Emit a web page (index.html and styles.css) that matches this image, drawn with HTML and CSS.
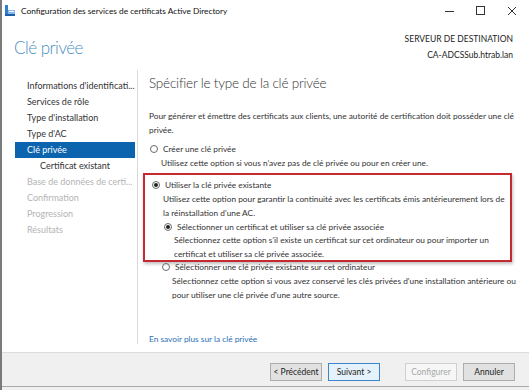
FILE: index.html
```html
<!DOCTYPE html>
<html lang="fr">
<head>
<meta charset="utf-8">
<title>Configuration des services de certificats Active Directory</title>
<link rel="stylesheet" href="styles.css">
</head>
<body>
<div class="window">
  <div class="titlebar">
    <svg class="appicon" width="10" height="11" viewBox="0 0 10 11">
      <rect x="0" y="0" width="3" height="9" fill="#2f7fd0"/>
      <rect x="3" y="5" width="7" height="4" fill="#8ab8e6"/>
      <rect x="0" y="9" width="10" height="2" fill="#1b5fa8"/>
      <rect x="4" y="6" width="5" height="1" fill="#ffffff"/>
    </svg>
    <span class="title">Configuration des services de certificats Active Directory</span>
    <div class="controls">
      <svg class="ctl" width="30" height="22" viewBox="0 0 30 22"><line x1="10" y1="11.5" x2="19" y2="11.5" stroke="#333" stroke-width="1"/></svg>
      <svg class="ctl" width="30" height="22" viewBox="0 0 30 22"><rect x="10.5" y="6.5" width="8" height="8" fill="none" stroke="#333" stroke-width="1"/></svg>
      <svg class="ctl" width="30" height="22" viewBox="0 0 30 22"><path d="M11 7 L19 15 M19 7 L11 15" stroke="#333" stroke-width="1"/></svg>
    </div>
  </div>
  <div class="header">
    <h1 class="pagetitle">Clé privée</h1>
    <div class="server">
      <div class="server-label">SERVEUR DE DESTINATION</div>
      <div class="server-name">CA-ADCSSub.htrab.lan</div>
    </div>
  </div>
  <div class="content">
    <nav class="nav">
      <div class="nav-item">Informations d'identificati...</div>
      <div class="nav-item">Services de rôle</div>
      <div class="nav-item">Type d'installation</div>
      <div class="nav-item">Type d'AC</div>
      <div class="nav-item active">Clé privée</div>
      <div class="nav-item sub">Certificat existant</div>
      <div class="nav-item disabled">Base de données de certi...</div>
      <div class="nav-item disabled">Confirmation</div>
      <div class="nav-item disabled">Progression</div>
      <div class="nav-item disabled">Résultats</div>
    </nav>
    <main class="main">
      <h2 class="section-title">Spécifier le type de la clé privée</h2>
      <p class="intro">Pour générer et émettre des certificats aux clients, une autorité de certification doit posséder une clé privée.</p>
      <div class="option">
        <div class="radio-row"><span class="radio"></span><span>Créer une clé privée</span></div>
        <p class="desc">Utilisez cette option si vous n’avez pas de clé privée ou pour en créer une.</p>
      </div>
      <div class="highlight">
        <div class="option">
          <div class="radio-row"><span class="radio checked"></span><span>Utiliser la clé privée existante</span></div>
          <p class="desc">Utilisez cette option pour garantir la continuité avec les certificats émis antérieurement lors de la réinstallation d'une AC.</p>
        </div>
        <div class="option suboption">
          <div class="radio-row"><span class="radio checked"></span><span>Sélectionner un certificat et utiliser sa clé privée associée</span></div>
          <p class="desc">Sélectionnez cette option s’il existe un certificat sur cet ordinateur ou pour importer un certificat et utiliser sa clé privée associée.</p>
        </div>
      </div>
      <div class="option suboption after">
        <div class="radio-row"><span class="radio"></span><span>Sélectionner une clé privée existante sur cet ordinateur</span></div>
        <p class="desc">Sélectionnez cette option si vous avez conservé les clés privées d'une installation antérieure ou pour utiliser une clé privée d'une autre source.</p>
      </div>
      <div class="spacer"></div>
      <a class="link" href="#">En savoir plus sur la clé privée</a>
    </main>
  </div>
  <div class="footer">
    <button class="btn">&lt; Précédent</button>
    <button class="btn primary">Suivant &gt;</button>
    <button class="btn disabled gap">Configurer</button>
    <button class="btn">Annuler</button>
  </div>
  <div class="bottom"></div>
</div>
</body>
</html>
```

FILE: styles.css
```css
* { box-sizing: border-box; }
html, body { margin: 0; padding: 0; }
body {
  width: 529px;
  height: 390px;
  overflow: hidden;
  background: #ffffff;
  font-family: "Lato", "Noto Sans", sans-serif;
  color: #1e1e1e;
}
.window {
  width: 529px;
  height: 390px;
  border-left: 2px solid #7a7a7a;
  display: flex;
  flex-direction: column;
  background: #ffffff;
}
.titlebar {
  height: 22px;
  display: flex;
  align-items: center;
  padding-left: 3px;
  flex: none;
}
.appicon { flex: none; margin-right: 6px; margin-top: -1px; }
.title { font-size: 8.3px; color: #111; }
.controls { margin-left: auto; display: flex; padding-right: 2px; }
.ctl { display: block; margin-left: 1px; }
.header {
  height: 48px;
  flex: none;
  display: flex;
  justify-content: space-between;
  padding: 0 16px 0 12px;
}
.pagetitle {
  margin: 0;
  margin-top: 14px;
  font-size: 17px;
  font-weight: 300;
  letter-spacing: -0.5px;
  color: #4a8dbf;
  line-height: 24px;
}
.server {
  text-align: right;
  font-size: 8.5px;
  color: #222;
  padding-top: 9px;
  line-height: 16px;
}
.content { flex: 1; display: flex; min-height: 0; }
.nav {
  width: 136px;
  flex: none;
  border-right: 1px solid #d9d9d9;
  padding-top: 8px;
  margin-bottom: 8px;
}
.nav-item {
  height: 16px;
  line-height: 16px;
  margin-left: 13px;
  margin-right: 2px;
  padding-left: 12px;
  font-size: 9px;
  color: #333;
  white-space: nowrap;
}
.nav-item.active { background: #0b64ad; color: #fff; }
.nav-item.sub { padding-left: 25px; }
.nav-item.disabled { color: #b4b4b4; }
.main {
  flex: 1;
  padding: 4px 8px 0 11px;
  display: flex;
  flex-direction: column;
  font-size: 8.3px;
  line-height: 14px;
  color: #333;
}
.section-title {
  margin: 0;
  font-size: 13.5px;
  font-weight: 300;
  letter-spacing: -0.2px;
  line-height: 18px;
  color: #333;
}
.intro { margin: 17px 0 0 0; }
.option { margin-top: 5px; }
.radio-row { display: flex; align-items: center; }
.radio {
  width: 8px; height: 8px;
  border: 1px solid #6a6a6a;
  border-radius: 50%;
  margin-left: 1px;
  margin-right: 5px;
  flex: none;
  display: flex; align-items: center; justify-content: center;
}
.radio.checked::after {
  content: "";
  width: 4px; height: 4px;
  border-radius: 50%;
  background: #222;
}
.desc { margin: 0 0 0 12px; }
.highlight {
  margin: 3px 9px 0 -6px;
  padding: 1px 0 0 6px;
  border: 2px solid #c42a30;
  box-shadow: 1px 2px 3px rgba(0,0,0,0.25);
  height: 89px;
}
.highlight .option:first-child { margin-top: 2px; }
.highlight .suboption .desc { line-height: 13.5px; }
.suboption { margin-left: 12px; margin-top: 0; }
.suboption .desc { margin-left: 11px; }
.after { margin-top: -2px; }
.spacer { flex: 1; }
.link {
  color: #2d70b6;
  text-decoration: none;
  margin-bottom: 6px;
}
.footer {
  height: 34px;
  flex: none;
  background: #f0f0f0;
  border-top: 1px solid #dcdcdc;
  display: flex;
  align-items: center;
  justify-content: flex-end;
  padding-right: 14px;
  gap: 6px;
}
.btn {
  height: 18px;
  width: 52px;
  padding: 0;
  font-family: inherit;
  font-size: 8.5px;
  color: #222;
  background: #e1e1e1;
  border: 1px solid #adadad;
  margin-top: 5px;
}
.btn.primary { border-color: #3a86cc; background: #e5f1fb; }
.btn.disabled { color: #a8a8a8; background: #f6f6f6; border-color: #cfcfcf; }
.btn.gap { margin-left: 19px; }
.bottom {
  height: 4px;
  flex: none;
  background: #f0f0f0;
  border-top: 1px solid #a8a8a8;
}
```
